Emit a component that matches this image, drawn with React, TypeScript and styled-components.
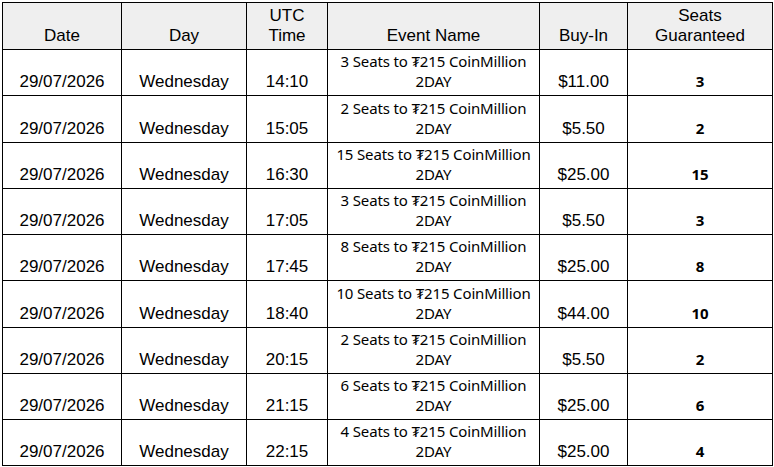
import styled, { createGlobalStyle } from "styled-components";

interface EventRow {
  time: string;
  seats: number;
  buyIn: string;
}

const rows: EventRow[] = [
  { time: "14:10", seats: 3, buyIn: "$11.00" },
  { time: "15:05", seats: 2, buyIn: "$5.50" },
  { time: "16:30", seats: 15, buyIn: "$25.00" },
  { time: "17:05", seats: 3, buyIn: "$5.50" },
  { time: "17:45", seats: 8, buyIn: "$25.00" },
  { time: "18:40", seats: 10, buyIn: "$44.00" },
  { time: "20:15", seats: 2, buyIn: "$5.50" },
  { time: "21:15", seats: 6, buyIn: "$25.00" },
  { time: "22:15", seats: 4, buyIn: "$25.00" },
];

const GlobalStyle = createGlobalStyle`
  html, body {
    margin: 0;
    background: #ffffff;
  }
  body {
    padding: 2px 0 0 2px;
    font-family: "Liberation Sans", Arial, sans-serif;
    color: #000;
  }
`;

const Table = styled.table`
  border-collapse: collapse;
  table-layout: fixed;
  width: 770px;
`;

const HeadCell = styled.th<{ w: number }>`
  box-sizing: border-box;
  width: ${(p) => p.w}px;
  height: 47px;
  padding: 0 0 3px;
  background: #efefef;
  border: 1px solid #000;
  font-weight: normal;
  font-size: 17px;
  line-height: 20px;
  vertical-align: bottom;
  text-align: center;
`;

const Cell = styled.td`
  box-sizing: border-box;
  height: 46.25px;
  padding: 0 0 3px;
  border: 1px solid #000;
  font-size: 17px;
  line-height: 20px;
  vertical-align: bottom;
  text-align: center;
  white-space: nowrap;
`;

const EventCell = styled(Cell)`
  font-family: "Noto Sans", "DejaVu Sans", sans-serif;
  font-size: 15px;
  letter-spacing: -0.15px;
  line-height: 20px;
  padding-bottom: 4px;
`;

const SeatsCell = styled(Cell)`
  font-family: "Noto Sans", "DejaVu Sans", sans-serif;
  font-size: 15px;
  font-weight: bold;
  padding-bottom: 4px;
`;

export default function App() {
  return (
    <>
      <GlobalStyle />
      <Table>
        <thead>
          <tr>
            <HeadCell w={119}>Date</HeadCell>
            <HeadCell w={125}>Day</HeadCell>
            <HeadCell w={81}>
              UTC
              <br />
              Time
            </HeadCell>
            <HeadCell w={212}>Event Name</HeadCell>
            <HeadCell w={88}>Buy-In</HeadCell>
            <HeadCell w={145}>
              Seats
              <br />
              Guaranteed
            </HeadCell>
          </tr>
        </thead>
        <tbody>
          {rows.map((r) => (
            <tr key={r.time}>
              <Cell>29/07/2026</Cell>
              <Cell>Wednesday</Cell>
              <Cell>{r.time}</Cell>
              <EventCell>
                {r.seats} Seats to ₮215 CoinMillion
                <br />
                2DAY
              </EventCell>
              <Cell>{r.buyIn}</Cell>
              <SeatsCell>{r.seats}</SeatsCell>
            </tr>
          ))}
        </tbody>
      </Table>
    </>
  );
}
